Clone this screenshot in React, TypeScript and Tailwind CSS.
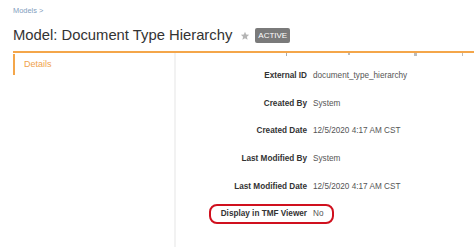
const rows = [
  { label: 'External ID', value: 'document_type_hierarchy' },
  { label: 'Created By', value: 'System' },
  { label: 'Created Date', value: '12/5/2020 4:17 AM CST' },
  { label: 'Last Modified By', value: 'System' },
  { label: 'Last Modified Date', value: '12/5/2020 4:17 AM CST' },
  { label: 'Display in TMF Viewer', value: 'No' },
];

function Star() {
  return (
    <svg viewBox="0 0 24 24" className="w-[10px] h-[10px] fill-[#b5b5b5]">
      <path d="M12 2l2.9 6.6 7.1.6-5.4 4.7 1.6 7.1L12 17.3 5.8 21l1.6-7.1L2 9.2l7.1-.6z" />
    </svg>
  );
}

export default function App() {
  return (
    <div className="w-[474px] h-[247px] overflow-hidden bg-white font-['Liberation_Sans',Arial,sans-serif]">
      <div className="pl-[13px] pt-[6px] text-[7.4px] leading-[9px] text-[#7f9dbd]">Models &gt;</div>

      <div className="flex items-center pl-[13px] mt-[11px] h-[18px]">
        <h1 className="text-[14.8px] leading-[18px] text-[#333]">Model: Document Type Hierarchy</h1>
        <span className="ml-[8px] mt-[2px]">
          <Star />
        </span>
        <span className="ml-[5px] mt-[1px] bg-[#7a7a7a] text-white text-[8px] leading-[15px] px-[3px] rounded-[2px]">
          ACTIVE
        </span>
      </div>

      <div className="ml-[13px] mt-[7px] border-t-2 border-[#f4a64a]" />

      <div className="flex h-[200px]">
        {/* left nav */}
        <div className="w-[161px] ml-[13px] pt-[1px]">
          <div className="h-[21px] border-l-2 border-[#f4a64a] pl-[9px] flex items-center text-[9px] text-[#f0a24c]">
            Details
          </div>
        </div>

        <div className="w-[2px] bg-[#f2f2f2]" />

        <div className="flex-1">
          {/* cut-off descenders from the row scrolled above */}
          <div className="flex h-[4px]">
            <span className="ml-[110px] w-px h-[3px] bg-[#aaa]" />
            <span className="ml-[61px] w-[2px] h-[2px] bg-[#bbb]" />
            <span className="ml-[64px] w-[3px] h-[3px] bg-[#bbb]" />
            <span className="ml-[45px] w-px h-[3px] bg-[#bbb]" />
          </div>

          <div className="pt-[5.5px]">
            {rows.map((r, i) => (
              <div key={r.label} className="relative flex items-center h-[27.6px] text-[8.2px] leading-[10px]">
                <div className="w-[131px] text-right font-bold text-[#333]">{r.label}</div>
                <div className="ml-[6px] text-[#555]">{r.value}</div>
                {i === rows.length - 1 && (
                  <div className="absolute left-[33px] top-[4px] w-[125px] h-[20px] border-2 border-[#d0101e] rounded-[8px]" />
                )}
              </div>
            ))}
          </div>
        </div>
      </div>
    </div>
  );
}
